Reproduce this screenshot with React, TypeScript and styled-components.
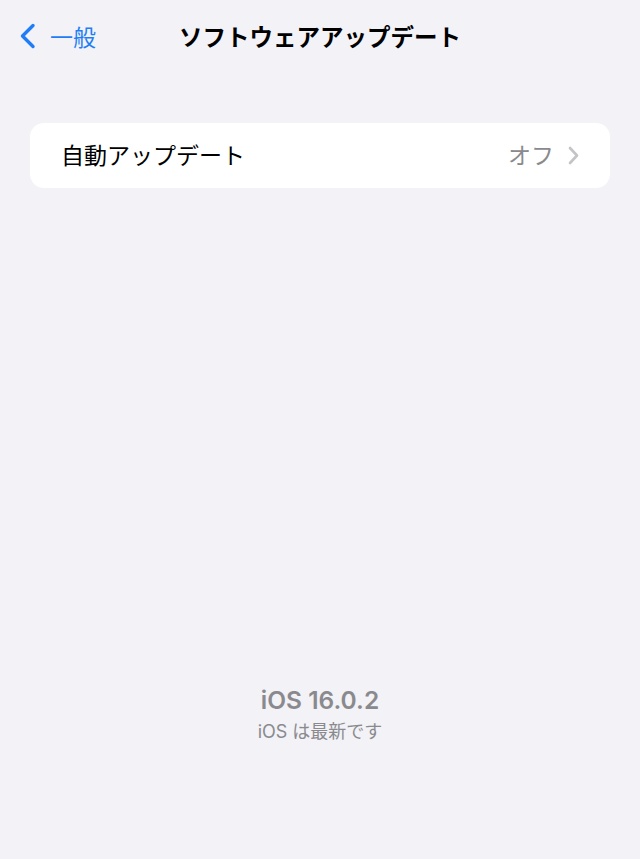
import React from "react";
import styled, { createGlobalStyle } from "styled-components";

const Global = createGlobalStyle`
  html, body { margin: 0; padding: 0; background: #f2f2f7; }
  body { font-family: Inter, "Noto Sans CJK JP", sans-serif; -webkit-font-smoothing: antialiased; }
`;

const Page = styled.div`
  min-height: 859px;
  display: flex;
  flex-direction: column;
  background: #f2f2f7;
`;

const NavBar = styled.header`
  height: 74px;
  display: grid;
  grid-template-columns: 1fr auto 1fr;
  align-items: center;
  padding: 0 19px 2px;
  box-sizing: border-box;
`;

const BackButton = styled.div`
  display: flex;
  align-items: center;
  gap: 13px;
  color: #1f7ef5;
  font-family: "Noto Sans CJK JP", sans-serif;
  font-size: 23px;
  line-height: 1;
`;

const Title = styled.h1`
  margin: 0;
  font-family: "Noto Sans CJK JP", sans-serif;
  font-weight: 700;
  font-size: 23.5px;
  color: #000;
`;

const Section = styled.section`
  margin-top: 49px;
  padding: 0 30px;
`;

const Card = styled.div`
  background: #fff;
  border-radius: 14px;
  height: 65px;
  display: flex;
  align-items: center;
  padding: 0 31px 3px 31px;
  box-sizing: border-box;
`;

const Label = styled.span`
  flex: 1;
  font-family: "Noto Sans CJK JP", sans-serif;
  font-size: 23px;
  color: #000;
`;

const Value = styled.span`
  font-family: "Noto Sans CJK JP", sans-serif;
  font-size: 23px;
  color: #8a8a8e;
  margin-right: 14px;
`;

const Chevron = styled.svg`
  margin-top: 3px;
`;

const Spacer = styled.div`
  flex: 1;
`;

const Footer = styled.footer`
  display: flex;
  flex-direction: column;
  align-items: center;
  padding-bottom: 116px;
  gap: 2px;
`;

const Version = styled.div`
  font-family: Inter, "Noto Sans CJK JP", sans-serif;
  font-weight: 600;
  font-size: 24.5px;
  color: #8a8a8e;
`;

const Status = styled.div`
  font-family: Inter, "Noto Sans CJK JP", sans-serif;
  font-size: 18px;
  color: #8a8a8e;
`;

export default function App() {
  return (
    <Page>
      <Global />
      <NavBar>
        <BackButton>
          <svg width="18" height="26" viewBox="0 0 18 26" fill="none">
            <path d="M14 2.5 L3.5 13 L14 23.5" stroke="#1f7ef5" strokeWidth="3.4" strokeLinecap="round" strokeLinejoin="round" />
          </svg>
          <span>一般</span>
        </BackButton>
        <Title>ソフトウェアアップデート</Title>
        <div />
      </NavBar>
      <Section>
        <Card>
          <Label>自動アップデート</Label>
          <Value>オフ</Value>
          <Chevron width="11" height="19" viewBox="0 0 11 19" fill="none">
            <path d="M2 2 L9 9.5 L2 17" stroke="#c4c4c7" strokeWidth="2.6" strokeLinecap="round" strokeLinejoin="round" />
          </Chevron>
        </Card>
      </Section>
      <Spacer />
      <Footer>
        <Version>iOS 16.0.2</Version>
        <Status>iOS は最新です</Status>
      </Footer>
    </Page>
  );
}
